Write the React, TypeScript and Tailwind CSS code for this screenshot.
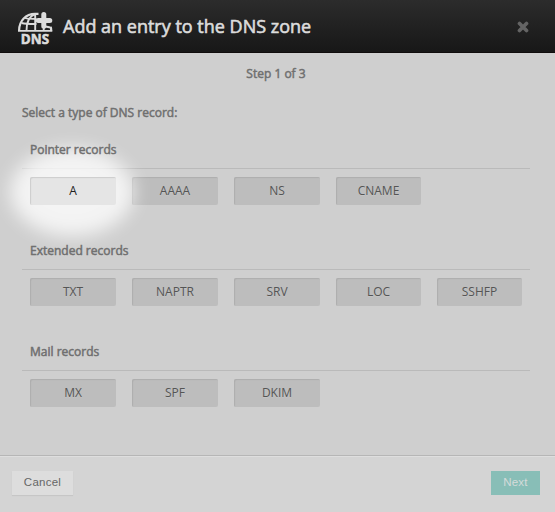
type Group = { title: string; records: string[]; className: string };

const groups: Group[] = [
  { title: "Pointer records", records: ["A", "AAAA", "NS", "CNAME"], className: "mt-[15px]" },
  { title: "Extended records", records: ["TXT", "NAPTR", "SRV", "LOC", "SSHFP"], className: "mt-[35px]" },
  { title: "Mail records", records: ["MX", "SPF", "DKIM"], className: "mt-[35px]" },
];

function DnsIcon() {
  return (
    <svg width="36" height="42" viewBox="0 0 36 42" className="mt-[9px] shrink-0 self-start" fill="none" stroke="#dcdcdc">
      <path d="M0 21.800h34.300" strokeWidth="1.800" />
      <path d="M1.100 21.500C1.100 11.500 8 4.800 17 4.800h3.500M33.200 21.500c0-1.500-.1-2.500-.5-3.700" strokeWidth="2.200" />
      <path d="M8.500 21.500C8.500 13 11.500 7 17 5M17.200 5V21.500M25.500 21.500c.3-1 .4-2 .4-3" strokeWidth="1.900" />
      <path d="M3.500 14c4 .9 8.500 1.100 15 1M27.500 17.500l5 1" strokeWidth="1.800" />
      <path d="M7 8.900c2.600.8 6 1 11.500 1" strokeWidth="1.600" />
      <path d="M25.800 5.600v11.600M20.200 11.400h11.600" strokeWidth="5" strokeLinecap="round" />
      <text x="2.800" y="34.500" fill="#dcdcdc" stroke="#dcdcdc" strokeWidth=".6" fontFamily="Open Sans" fontWeight="700" fontSize="14.800" textLength="28.300" lengthAdjust="spacingAndGlyphs">DNS</text>
    </svg>
  );
}

function RecordButton({ name }: { name: string }) {
  const active = name === "A";
  return (
    <button
      className={
        active
          ? "relative z-20 h-7 rounded-[2px] bg-[#e5e5e5] text-[12px] leading-[28px] text-[#222] shadow-[inset_1px_1px_1px_#cdcdcd]"
          : "h-7 rounded-[2px] bg-[#bdbdbd] text-[12px] leading-[28px] text-[#555] [text-shadow:0_1px_0_#c4c4c4] shadow-[inset_1px_1px_1px_#adadad]"
      }
    >
      {name}
    </button>
  );
}

function RecordGroup({ group, lit }: { group: Group; lit: boolean }) {
  return (
    <section className={group.className}>
      <h2 className="relative z-20 ml-2 h-[22px] text-[12px] leading-[22px] font-normal [-webkit-text-stroke:0.5px_#707070]">{group.title}</h2>
      <div className="relative mt-[7px] border-t border-[#bababa] pt-2 pl-2">
        {lit && (
          <div className="pointer-events-none absolute -top-[21px] -left-[12px] z-10 h-[88px] w-[124px] rounded-[50%] bg-white/76 blur-[9px]" />
        )}
        <div className="grid grid-cols-[86px_86px_86px_85px_85px] gap-x-4">
          {group.records.map((name) => (
            <RecordButton key={name} name={name} />
          ))}
        </div>
      </div>
    </section>
  );
}

export default function App() {
  return (
    <div className="flex h-[512px] w-[555px] flex-col overflow-hidden bg-[#cfcfcf] font-['Open_Sans',sans-serif] text-[#707070]">
      <header className="flex h-[53px] shrink-0 items-center bg-linear-to-b from-[#2c2c2c] to-[#171717] pr-[26px] pl-[18px] shadow-[inset_0_-1px_0_#100d0d]">
        <DnsIcon />
        <h1 className="ml-[9px] pb-[2px] text-[18px] leading-6 font-normal text-[#dcdcdc] [-webkit-text-stroke:0.6px_#dcdcdc]">
          Add an entry to the DNS zone
        </h1>
        <button aria-label="Close" className="ml-auto">
          <svg width="12" height="12" viewBox="0 0 12 12" stroke="#646464" strokeWidth="3.700" strokeLinecap="round">
            <path d="M2.500 2.500l7 7M9.500 2.500l-7 7" />
          </svg>
        </button>
      </header>
      <main className="flex-1 px-[22px] pt-[10px]">
        <p className="mr-[3px] text-center text-[12px] leading-[22px] [-webkit-text-stroke:0.5px_#707070]">Step 1 of 3</p>
        <p className="mt-[17px] text-[12px] leading-[22px] [-webkit-text-stroke:0.5px_#707070]">Select a type of DNS record:</p>
        <div className="mr-[3px]">
          {groups.map((group, i) => (
            <RecordGroup key={group.title} group={group} lit={i === 0} />
          ))}
        </div>
      </main>
      <footer className="flex h-[57px] shrink-0 items-start justify-between border-t border-[#b6b6b6] bg-[#d4d4d4] pt-[15px] pr-[15px] pl-3 font-['Liberation_Sans',Arial,sans-serif] text-[11.5px] tracking-[0.25px] shadow-[inset_0_1px_0_#dedede]">
        <button className="h-6 w-[61px] bg-[#dddddd] text-[#666] shadow-[0_1px_1px_#c6c6c6]">Cancel</button>
        <button className="h-6 w-[49px] bg-[#88beb7] text-[#d5dbda]">Next</button>
      </footer>
    </div>
  );
}
